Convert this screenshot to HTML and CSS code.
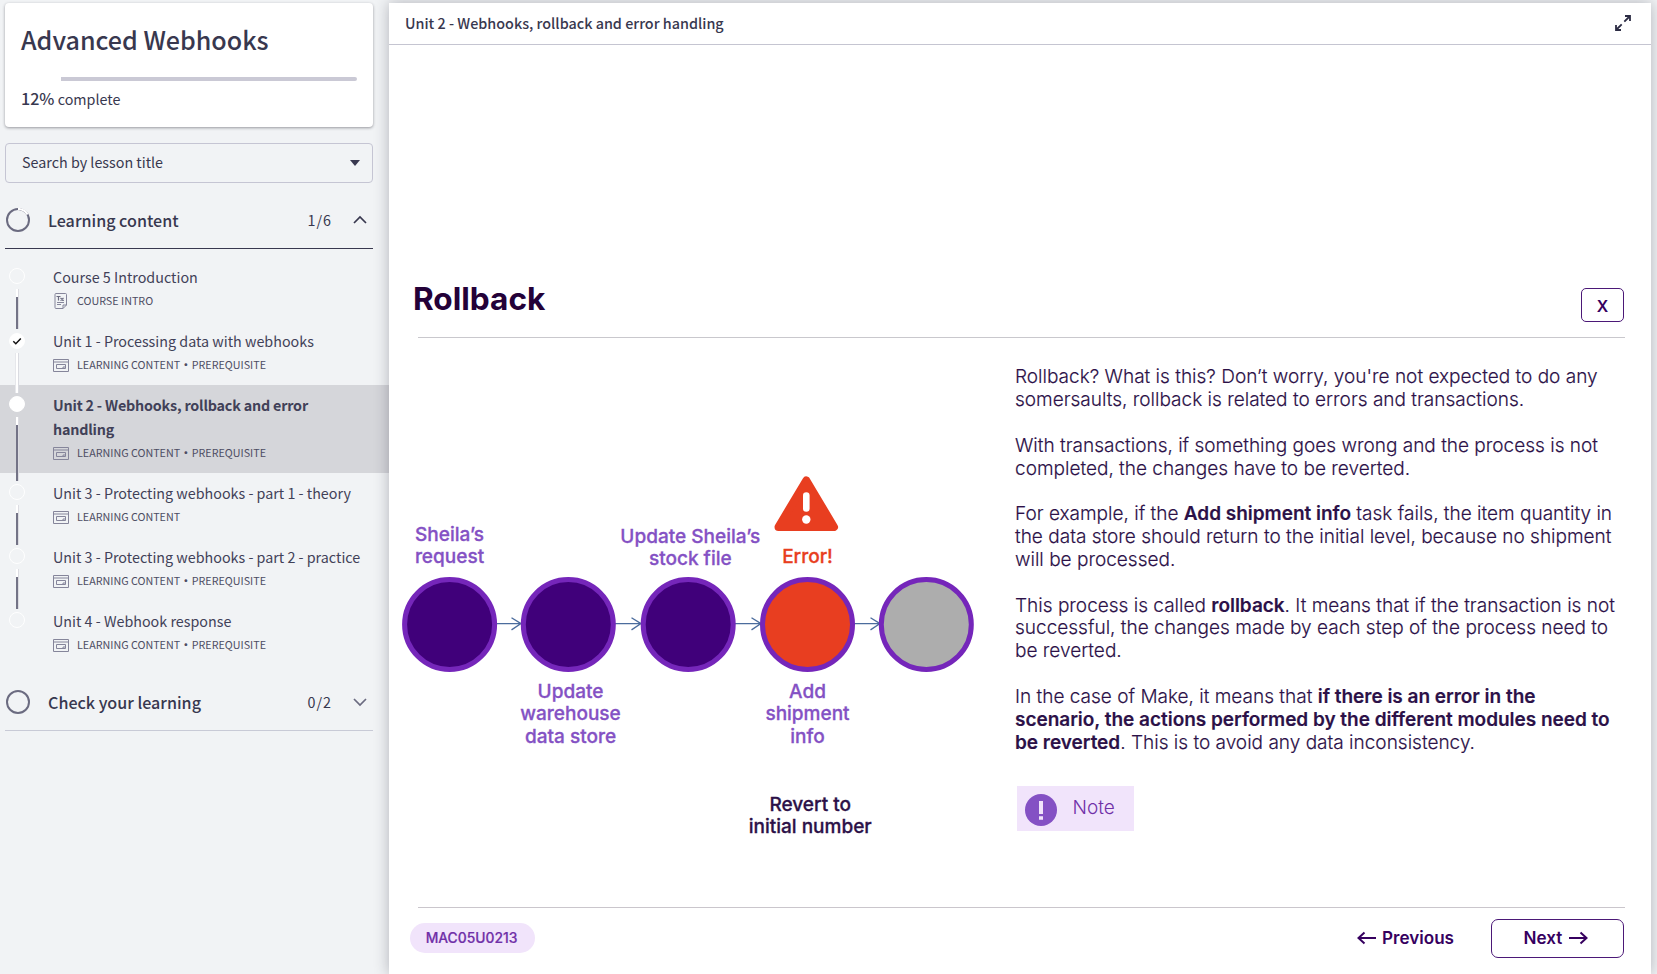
FILE: index.html
```
<!DOCTYPE html>
<html lang="en">
<head>
<meta charset="utf-8">
<title>Advanced Webhooks</title>
<link rel="stylesheet" href="styles.css">
</head>
<body>
<svg class="defs" aria-hidden="true">
  <symbol id="lesson" viewBox="0 0 16 13">
    <path d="M.5.5h15v12H.5zM.5 3h15M3.500 5.500h9v4h-9zM12.500 8h-2.500v1.500" fill="none" stroke="#85859a"/>
  </symbol>
  <symbol id="doc" viewBox="0 0 14 16">
    <path d="M2 .5h9.500q1 0 1 1v10.500l-3.500 3.500h-7q-1 0-1-1v-13q0-1 1-1zM12.500 12h-3.500v3.500M3 9.500h7M3 11.500h4M8 7.300h2" fill="none" stroke="#85859a"/>
    <path d="M2.500 3.500h4M4.500 3.500v4M6.500 5l3 2.500M9.500 5l-3 2.500" fill="none" stroke="#6b6b80" stroke-width="1.200"/>
  </symbol>
</svg>
<div class="app">
  <aside class="sidebar">
    <section class="card">
      <h1 class="course">Advanced Webhooks</h1>
      <div class="progress"><div class="progress-done" style="width:12%"></div></div>
      <p class="complete"><b class="pct">12%</b> complete</p>
    </section>
    <div class="select"><span>Search by lesson title</span><i class="caret"></i></div>

    <div class="section section-open">
      <svg class="ring" viewBox="0 0 24 24"><circle cx="12" cy="12" r="11" fill="none" stroke="#6b6b80" stroke-width="2"/><path d="M12 1A11 11 0 0 1 21.500 6.500" fill="none" stroke="#fff" stroke-width="2.200"/></svg>
      <span class="section-name">Learning content</span><span class="count">1/6</span>
      <svg class="chev" viewBox="0 0 14 14"><path d="M1 10l6-6 6 6" fill="none" stroke="#38384f" stroke-width="1.700"/></svg>
    </div>
    <ul class="lessons">
      <li class="lesson"><div class="rail"><i class="dot"></i><i class="link"></i></div>
        <div class="text"><span class="name">Course 5 Introduction</span><span class="meta"><svg class="ico doc"><use href="#doc"/></svg>COURSE INTRO</span></div></li>
      <li class="lesson"><div class="rail low"><i class="dot full"><svg viewBox="0 0 16 16"><path d="M4.300 8.300l2.500 2.400 5-5.200" fill="none" stroke="#111" stroke-width="1.500"/></svg></i><i class="link done"></i></div>
        <div class="text"><span class="name">Unit 1 - Processing data with webhooks</span><span class="meta"><svg class="ico"><use href="#lesson"/></svg>LEARNING CONTENT <i class="sep">·</i> PREREQUISITE</span></div></li>
      <li class="lesson active"><div class="rail"><i class="dot full"></i><i class="link"></i></div>
        <div class="text"><span class="name">Unit 2 - Webhooks, rollback and error<br>handling</span><span class="meta"><svg class="ico"><use href="#lesson"/></svg>LEARNING CONTENT <i class="sep">·</i> PREREQUISITE</span></div></li>
      <li class="lesson"><div class="rail"><i class="dot"></i><i class="link"></i></div>
        <div class="text"><span class="name">Unit 3 - Protecting webhooks - part 1 - theory</span><span class="meta"><svg class="ico"><use href="#lesson"/></svg>LEARNING CONTENT</span></div></li>
      <li class="lesson"><div class="rail"><i class="dot"></i><i class="link"></i></div>
        <div class="text"><span class="name">Unit 3 - Protecting webhooks - part 2 - practice</span><span class="meta"><svg class="ico"><use href="#lesson"/></svg>LEARNING CONTENT <i class="sep">·</i> PREREQUISITE</span></div></li>
      <li class="lesson"><div class="rail"><i class="dot"></i></div>
        <div class="text"><span class="name">Unit 4 - Webhook response</span><span class="meta"><svg class="ico"><use href="#lesson"/></svg>LEARNING CONTENT <i class="sep">·</i> PREREQUISITE</span></div></li>
    </ul>
    <div class="section">
      <svg class="ring" viewBox="0 0 24 24"><circle cx="12" cy="12" r="11" fill="none" stroke="#6b6b80" stroke-width="2"/></svg>
      <span class="section-name">Check your learning</span><span class="count">0/2</span>
      <svg class="chev" viewBox="0 0 14 14"><path d="M1 4l6 6 6-6" fill="none" stroke="#6b6b80" stroke-width="1.700"/></svg>
    </div>
  </aside>

  <main class="panel">
    <header class="bar">
      <span>Unit 2 - Webhooks, rollback and error handling</span>
      <svg class="expand" viewBox="0 0 16 16"><path d="M9.300 6.700L14 2M10 1h5v5M6.700 9.300L2 14M1 10v5h5" fill="none" stroke="#2c2c44" stroke-width="1.800"/></svg>
    </header>
    <div class="slide">
      <div class="head"><h2 class="title">Rollback</h2><button class="close">X</button></div>
      <div class="content">
        <div class="diagram">
          <svg class="flow" viewBox="0 0 600 500">
            <g fill="none" stroke="#4b6c9d" stroke-width="1.300">
              <path d="M108 173.600h25M122.500 167.700l9.500 5.900-9.500 6.300"/>
              <path d="M226 173.600h26M242.500 167.700l9.500 5.900-9.500 6.300"/>
              <path d="M346 173.600h25M362.500 167.700l9.500 5.900-9.500 6.300"/>
              <path d="M465 173.600h26M481.500 167.700l9.500 5.900-9.500 6.300"/>
            </g>
            <g stroke="#7526ba" stroke-width="5" fill="#40007a">
              <circle cx="60.600" cy="174.500" r="45"/>
              <circle cx="179.300" cy="174.500" r="45"/>
              <circle cx="299.200" cy="174.500" r="45"/>
              <circle cx="418.500" cy="174.500" r="45" fill="#e83e20"/>
              <circle cx="537.300" cy="174.500" r="45" fill="#adadad"/>
            </g>
            <path d="M417.300 30.500L445 77H389.500z" fill="#e83e20" stroke="#e83e20" stroke-width="8" stroke-linejoin="round"/>
            <path d="M417.300 45.500v13" stroke="#fff" stroke-width="6.600" stroke-linecap="round"/>
            <circle cx="417.300" cy="69.500" r="4.200" fill="#fff"/>
          </svg>
          <div class="label sheila">Sheila’s<br>request</div>
          <div class="label warehouse">Update<br>warehouse<br>data store</div>
          <div class="label stock">Update Sheila’s<br>stock file</div>
          <div class="label error">Error!</div>
          <div class="label add">Add<br>shipment<br>info</div>
          <div class="label revert">Revert to<br>initial number</div>
        </div>
        <div class="copy">
          <p>Rollback? What is this? Don’t worry, you're not expected to do any<br>somersaults, rollback is related to errors and transactions.</p>
          <p>With transactions, if something goes wrong and the process is not<br>completed, the changes have to be reverted.</p>
          <p>For example, if the <b>Add shipment info</b> task fails, the item quantity in<br>the data store should return to the initial level, because no shipment<br>will be processed.</p>
          <p>This process is called <b>rollback</b>. It means that if the transaction is not<br>successful, the changes made by each step of the process need to<br>be reverted.</p>
          <p>In the case of Make, it means that <b>if there is an error in the<br>scenario, the actions performed by the different modules need to<br>be reverted</b>. This is to avoid any data inconsistency.</p>
          <div class="note"><svg class="note-ico" viewBox="0 0 32 32"><circle cx="16" cy="16" r="16" fill="#8451c4"/><path d="M16 7v13M16 22.200v3.600" stroke="#f1e4fb" stroke-width="4"/></svg><span>Note</span></div>
        </div>
      </div>
      <footer class="foot">
        <span class="code">MAC05U0213</span>
        <button class="prev"><svg class="arrow" viewBox="0 0 20 14"><path d="M19 7H1.500M7.500 1.500L1.500 7l6 5.500" fill="none" stroke="#36005f" stroke-width="2"/></svg>Previous</button>
        <button class="next">Next<svg class="arrow" viewBox="0 0 20 14"><path d="M1 7h17.500M12.500 1.500l6 5.500-6 5.500" fill="none" stroke="#36005f" stroke-width="2"/></svg></button>
      </footer>
    </div>
  </main>
</div>
</body>
</html>
```
FILE: styles.css
```
* { box-sizing: border-box; }
body {
  margin: 0;
  height: 974px;
  overflow: hidden;
  background: #f1f3f5;
  color: #38384f;
  font: 400 14.320px/24px "Noto Sans CJK SC", "Noto Sans", sans-serif;
}
h1, h2, p, ul { margin: 0; padding: 0; }
i { font-style: normal; }
.defs { display: none; }
.app { display: flex; height: 974px; padding-right: 6px; }

/* Sidebar */
.sidebar { width: 389px; padding-top: 3px; }
.card {
  width: 368px;
  height: 124px;
  margin-left: 5px;
  padding: 19px 16px 0;
  background: #fff;
  border-radius: 4px;
  box-shadow: 0 1px 3px rgba(40, 40, 50, .45);
}
.course { font-size: 25.070px; line-height: 34px; font-weight: 500; }
.progress { height: 4px; margin-top: 21px; background: #cac9d5; border-radius: 2px; }
.progress-done { height: 4px; background: #fff; }
.complete { margin-top: 5px; }
.pct { font-weight: 500; font-size: 16.100px; }
.select {
  display: flex;
  align-items: center;
  justify-content: space-between;
  width: 368px;
  height: 40px;
  margin: 16px 0 9px 5px;
  padding: 0 12px 2px 16px;
  border: 1px solid #c5c5d3;
  border-radius: 4px;
}
.caret { margin-top: 2px; border: 5px solid transparent; border-top: 6px solid #38384f; border-bottom: 0; }
.section {
  display: flex;
  align-items: center;
  width: 368px;
  height: 57px;
  margin-left: 5px;
  border-bottom: 1px solid #c8cad6;
}
.section-open { border-bottom-color: #38384f; }
.ring { width: 24px; height: 24px; margin: 0 18px 0 1px; }
.section-name { flex: 1; font-size: 16.100px; font-weight: 500; }
.count { letter-spacing: 1px; margin-right: 21px; }
.chev { width: 14px; height: 14px; margin-right: 6px; }
.lessons { list-style: none; padding: 8px 0 9px; }
.lesson { display: flex; padding-left: 9px; height: 64px; }
.active { height: 88px; background: #d5d6da; }
.rail { display: flex; flex-direction: column; align-items: center; width: 16px; margin: 0 28px -8px 0; padding-top: 11px; }
.low { padding-top: 12px; }
.low .link { margin-top: 4px; }
.dot { width: 16px; height: 16px; border: 1px solid #fff; border-radius: 50%; }
.full { background: #fff; }
.dot svg { display: block; width: 16px; height: 16px; margin: -1px; }
.link {
  flex: 1;
  width: 3px;
  margin-top: 5px;
  border-right: 1px solid #dcdce2;
  background: linear-gradient(#fff 8px, #737386 8px);
}
.done { background: #fff; border-right: 1px solid #dadbe1; border-left: 1px solid #e6e7eb; width: 4px; }
.text { display: flex; flex-direction: column; padding-top: 8px; white-space: nowrap; }
.name { color: #414158; }
.active .name { font-weight: 700; letter-spacing: -.19px; }
.meta { display: flex; align-items: center; font-size: 10.740px; color: #4d4d63; white-space: pre; }
.ico { width: 16px; height: 13px; margin-right: 8px; }
.doc { height: 16px; }
.sep { font-weight: 700; width: 6.800px; display: flex; justify-content: center; }

/* Lesson panel */
.panel {
  flex: 1;
  display: flex;
  flex-direction: column;
  margin-top: 3px;
  background: #fff;
  box-shadow: 0 0 14px rgba(30, 30, 45, .3);
}
.bar {
  display: flex;
  align-items: center;
  justify-content: space-between;
  height: 42px;
  padding: 0 20px 2px 16px;
  border-bottom: 1px solid #c5c5d1;
  font-weight: 500;
  font-size: 14.360px;
}
.expand { width: 16px; height: 16px; }
.slide { display: flex; flex-direction: column; font-family: Inter, sans-serif; color: #2c1148; }
.head {
  display: flex;
  justify-content: space-between;
  align-items: flex-start;
  height: 293px;
  margin: 0 26px 0 29px;
  padding: 234px 1px 0 0;
  border-bottom: 1px solid #c9c8cd;
}
.title { margin: 0 0 0 -5px; font-size: 31.600px; line-height: 40px; font-weight: 700; color: #240138; }
button { font: 600 17px/24px Inter, sans-serif; color: #36005f; background: none; border: 0; padding: 0; }
.close { width: 43px; height: 34px; margin-top: 9px; padding-top: 1px; border: 1.500px solid #4b1877; border-radius: 5px; font-size: 16px; }
.content { display: flex; height: 569px; }
.diagram { position: relative; width: 626px; }
.flow { position: absolute; left: 0; top: 112px; width: 600px; height: 500px; }
.label {
  position: absolute;
  transform: translateX(-50%);
  font-size: 19.030px;
  line-height: 22.830px;
  font-weight: 500;
  -webkit-text-stroke: .3px;
  color: #8451c4;
  text-align: center;
  white-space: nowrap;
}
.sheila { left: 60.500px; top: 185.500px; }
.warehouse { left: 181.500px; top: 342.500px; }
.stock { left: 301.300px; top: 187.500px; }
.error { left: 418.500px; top: 207.500px; color: #e83e20; }
.add { left: 418.500px; top: 342.500px; }
.revert { left: 421.200px; top: 455.500px; color: #2c1148; }
.copy { padding-top: 28.300px; font-size: 19.030px; line-height: 22.830px; font-weight: 300; white-space: nowrap; }
.copy p { margin-bottom: 22.830px; -webkit-text-stroke: .15px; }
.copy b { font-weight: 600; letter-spacing: -.03px; }
.note {
  display: flex;
  align-items: center;
  width: 117px;
  height: 45px;
  margin: 31.500px 0 0 2px;
  padding: 0 0 0 8px;
  background: #f1e4fb;
  color: #7030a8;
}
.note-ico { width: 32px; height: 32px; margin: 3px 15.500px 0 0; }
.foot {
  display: flex;
  align-items: center;
  height: 61px;
  margin: 0 26px 0 29px;
  border-top: 1px solid #cac6cc;
}
.code {
  width: 125px;
  height: 30px;
  margin: 0 auto 0 -8px;
  padding-right: 2px;
  border-radius: 15px;
  background: #f1e4fb;
  color: #7030a8;
  font-size: 13.850px;
  line-height: 30px;
  font-weight: 500;
  -webkit-text-stroke: .2px;
  text-align: center;
}
.prev, .next { display: flex; align-items: center; font-size: 17.100px; }
.prev { gap: 5px; margin-right: 37px; }
.next { justify-content: center; gap: 6px; width: 133px; height: 39px; padding-right: 3px; border: 1.500px solid #4b1877; border-radius: 7px; margin-right: 1px; }
.arrow { width: 20px; height: 14px; }
```
